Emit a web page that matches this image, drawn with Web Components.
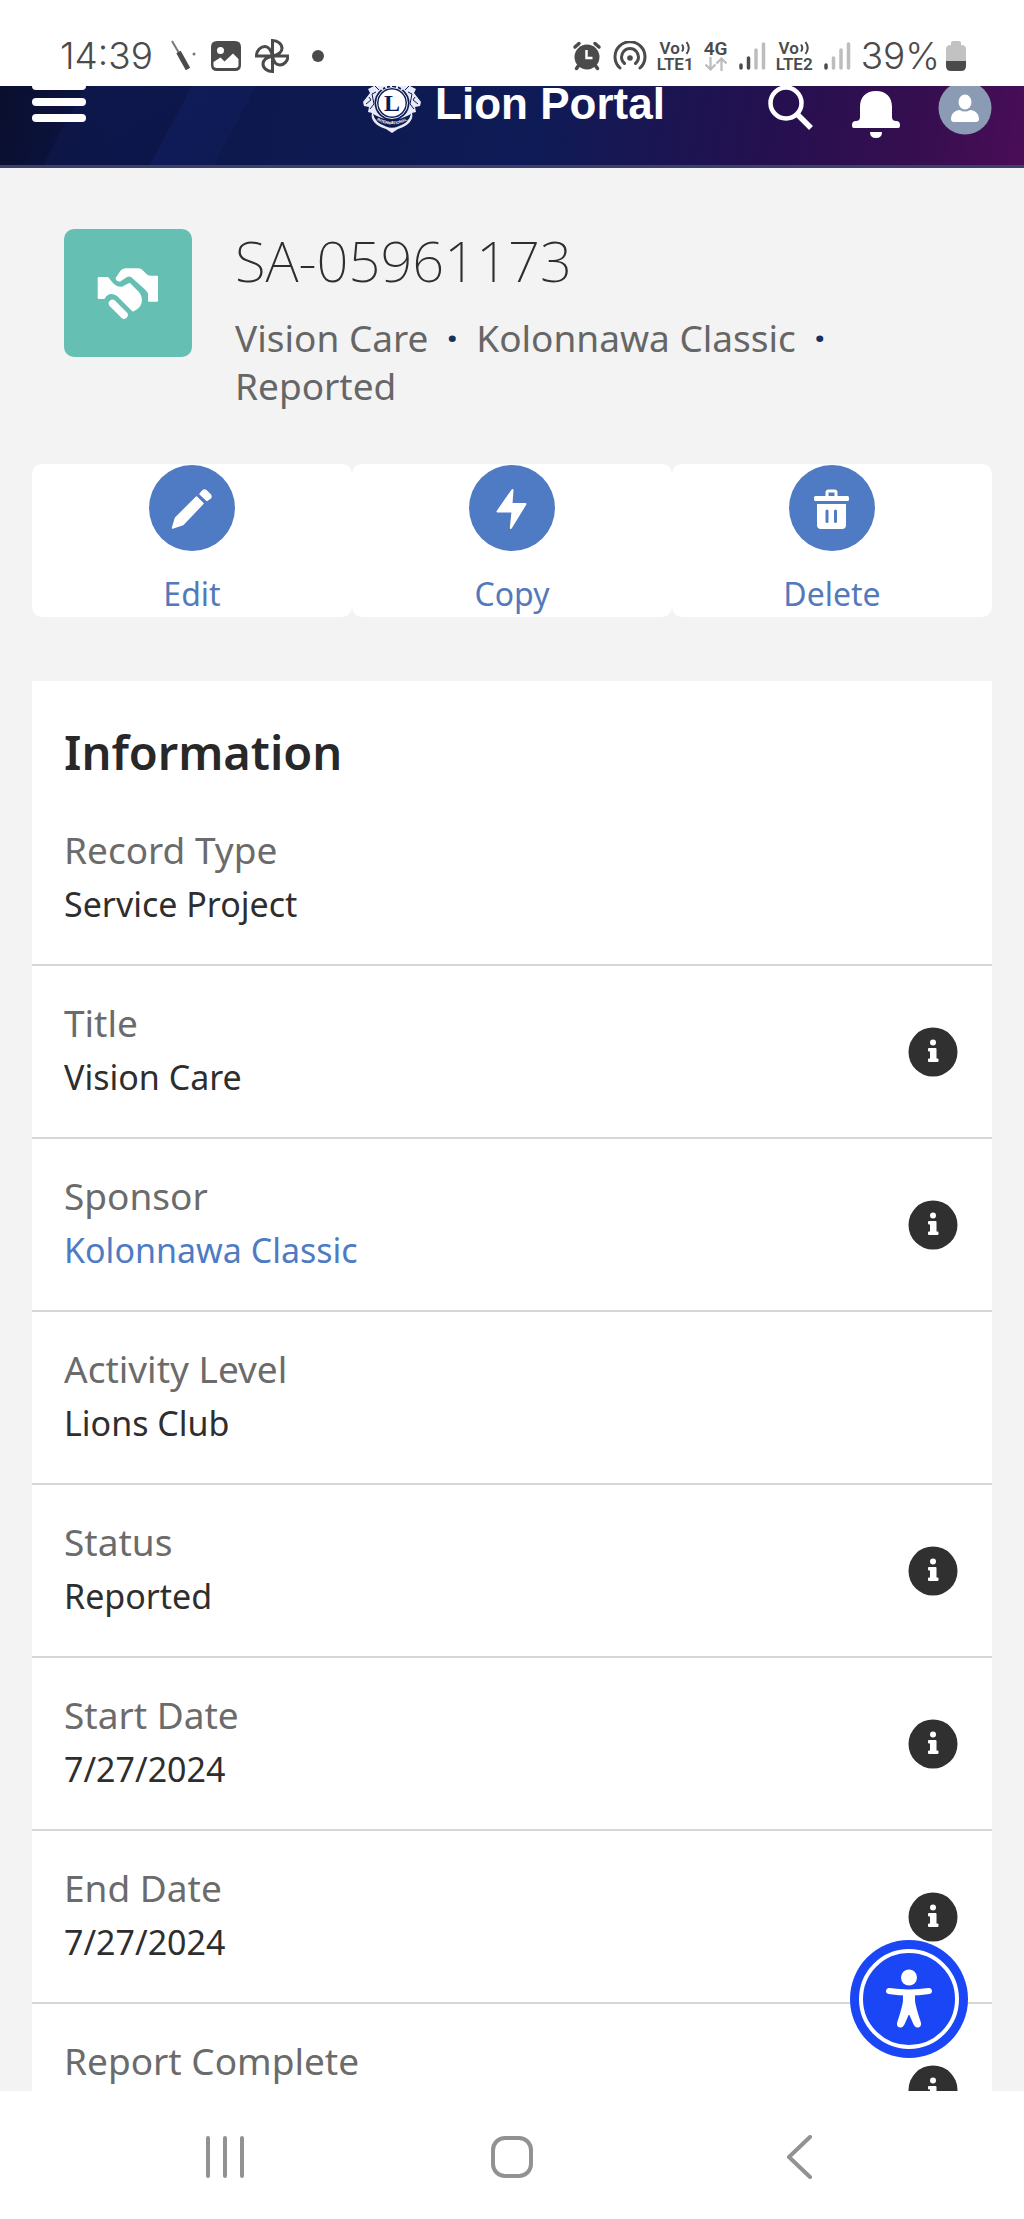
<!DOCTYPE html>
<html lang="en">
<head>
<meta charset="utf-8">
<meta name="viewport" content="width=device-width, initial-scale=1">
<title>SA-05961173 | Lion Portal</title>
<style>
  html, body { margin: 0; height: 100%; }
  body { font-family: "Noto Sans", "Open Sans", sans-serif; background: #fff; color: #2e2e2e; }
</style>
</head>
<body>
<portal-app></portal-app>

<template id="status-bar">
  <style>
    :host { display: flex; justify-content: space-between; align-items: center; box-sizing: border-box; height: 86px; padding: 26px 58px 0 60px; background: #fff; color: #4b4b4b; font-family: Inter, Roboto, sans-serif; }
    .group { display: flex; align-items: center; }
    .clock, .percent { font-size: 37px; line-height: 48px; font-weight: 300; }
    svg { display: block; flex: none; }
    .left { gap: 14px; }
    .right { gap: 10px; }
    .power { display: flex; align-items: center; gap: 6px; }
    .net { font: 600 17px/16px Roboto, sans-serif; display: flex; flex-direction: column; align-items: center; }
    .net span { display: flex; align-items: center; gap: 1px; }
    .gen { font-size: 19px; }
  </style>
  <div class="group left">
    <span class="clock">14:39</span>
    <svg width="30" height="32" viewBox="-2 0 30 32"><path d="M3 1 10 13" stroke="#777" stroke-width="2"/><path d="M9.500 12 19 29" stroke="#4b4b4b" stroke-width="5"/><circle cx="25" cy="14" r="1.500" fill="#777"/></svg>
    <svg width="30" height="30" viewBox="0 0 30 30"><path fill="#4b4b4b" fill-rule="evenodd" d="M6 0H24Q30 0 30 6V24Q30 30 24 30H6Q0 30 0 24V6Q0 0 6 0ZM9.500 6A3.500 3.500 0 1 0 9.500 13A3.500 3.500 0 1 0 9.500 6ZM2.500 21V24Q2.500 27 6 27H24Q27.500 27 27.500 24V18L22 12.500 13.500 20.500 9.500 16.500Z"/></svg>
    <svg width="34" height="34" viewBox="0 0 34 34" fill="none" stroke="#4b4b4b" stroke-width="3"><path d="M17.500 17V1.500C23 1.500 27 5 27 9.500C27 13 24 15.500 17.500 17ZM17.500 17H33C33 22 29 26 25 26C21 26 18.500 23 17.500 17ZM17.500 17V32.500C12 32.500 8 29 8 25C8 21 11 18.500 17.500 17ZM17.500 17H1.500C1.500 11 6 7.500 10 7.500C14 7.500 16 11 17.500 17Z"/></svg>
    <svg width="30" height="34" viewBox="2 0 30 34"><circle cx="17" cy="17" r="6" fill="#4b4b4b"/></svg>
  </div>
  <div class="group right">
    <svg width="32" height="30" viewBox="0 0 32 30"><g stroke="#4b4b4b" stroke-width="3.500" stroke-linecap="round"><path d="M4 6 8 2.500M28 6 24 2.500M8 24 5.500 27.500M24 24 26.500 27.500"/></g><circle cx="16" cy="16" r="12.500" fill="#4b4b4b"/><path d="M15.500 9V17H21.500" fill="none" stroke="#fff" stroke-width="2.500"/></svg>
    <svg width="34" height="30" viewBox="0 0 34 30" fill="none" stroke="#4b4b4b" stroke-width="3" stroke-linecap="round"><path d="M7 27A15 15 0 1 1 27 27M11.500 22.500A8.500 8.500 0 1 1 22.500 22.500"/><circle cx="17" cy="17" r="2.800" fill="#4b4b4b" stroke="none"/></svg>
    <div class="net"><span>Vo<svg width="10" height="14" viewBox="0 0 10 14" fill="none" stroke="#4b4b4b" stroke-width="2"><path d="M1 3.500Q3.500 7 1 10.500M5.500 1Q10 7 5.500 13"/></svg></span><span>LTE1</span></div>
    <div class="net gen"><span>4G</span><svg width="24" height="14" viewBox="0 0 24 14" fill="none" stroke="#bbb" stroke-width="2.200"><path d="M6.500 0V12M1.500 7.500 6.500 12.500 11.500 7.500M17.500 14V2M12.500 6.500 17.500 1.500 22.500 6.500"/></svg></div>
    <svg width="28" height="28" viewBox="0 0 28 28" stroke-width="3.500" stroke-linecap="round"><path d="M3 23V26M10.500 16V26" stroke="#4b4b4b"/><path d="M18 8V26M25.500 2V26" stroke="#bdbdbd"/></svg>
    <div class="net"><span>Vo<svg width="10" height="14" viewBox="0 0 10 14" fill="none" stroke="#4b4b4b" stroke-width="2"><path d="M1 3.500Q3.500 7 1 10.500M5.500 1Q10 7 5.500 13"/></svg></span><span>LTE2</span></div>
    <svg width="28" height="28" viewBox="0 0 28 28" stroke-width="3.500" stroke-linecap="round"><path d="M3 23V26" stroke="#4b4b4b"/><path d="M10.500 16V26M18 8V26M25.500 2V26" stroke="#bdbdbd"/></svg>
    <span class="power"><span class="percent">39%</span>
    <svg width="20" height="30" viewBox="0 0 20 30"><path fill="#c2c2c2" d="M5 4V2Q5 0 7 0H13Q15 0 15 2V4Q20 4 20 8V20H0V8Q0 4 5 4Z"/><path fill="#4b4b4b" d="M0 20H20V25Q20 30 15 30H5Q0 30 0 25Z"/></svg></span>
  </div>
</template>

<template id="portal-header">
  <style>
    :host { display: grid; grid-template-columns: 1fr auto 1fr; box-sizing: border-box; height: 82px; flex: none; padding: 0 32px; border-bottom: 3px solid #3b406f;
      background:
        linear-gradient(118deg, #16267300 8%, #16267333 8%, #16267300 18%, #16267355 18%, #16267333 24%, #16267300 24%),
        linear-gradient(100deg, #0a0f2e 0%, #0c1547 12%, #0d194f 28%, #0e1b56 52%, #25104f 75%, #370e50 90%, #4a0d57 100%); }
    button { border: 0; padding: 0; background: none; display: block; }
    svg { display: block; }
    .brand { display: flex; gap: 13px; padding-left: 3px; color: #fff; text-decoration: none; font: 700 44px/36px "Liberation Sans", Arial, sans-serif; }
    .tools { display: flex; justify-content: flex-end; gap: 38px; }
  </style>
  <button aria-label="Menu"><svg width="56" height="79" viewBox="0 0 56 79" fill="#fff"><rect y="-4" width="54" height="8" rx="4"/><rect y="12" width="54" height="8" rx="4"/><rect y="28" width="54" height="8" rx="4"/></svg></button>
  <a class="brand" href="#">
    <svg width="60" height="79" viewBox="0 0 60 79" aria-hidden="true">
      <path fill="#e8ebf7" d="M12 0 6 3 8 7 1 16 2 20 7 21 6 26 10 27C8 34 14 40 24 43L30 47 36 43C46 40 52 34 50 27L54 26 53 21 58 20 59 16 52 7 54 3 48 0Z"/>
      <path fill="none" stroke="#0d1a52" stroke-width="1" d="M4 18 9 14 7 11M8 23 12 18 10 8 14 6M56 18 51 14 53 11M52 23 48 18 50 8 46 6M13 0 17 4M47 0 43 4"/>
      <path fill="#0d1a52" d="M11 28Q30 39 49 28Q47 37 36 40.500Q30 43 24 40.500Q13 37 11 28Z"/>
      <circle cx="30" cy="17" r="17.500" fill="#0d1a52"/>
      <circle cx="30" cy="17" r="15.500" fill="none" stroke="#e8ebf7" stroke-width="1"/>
      <circle cx="30" cy="17" r="13.500" fill="#fff"/>
      <text x="30" y="25" text-anchor="middle" font-family="Liberation Serif, serif" font-weight="700" font-size="24" fill="#0d1a52">L</text>
      <path id="band" d="M13 33Q30 44 47 33" fill="none"/>
      <text font-family="Liberation Sans, sans-serif" font-weight="700" font-size="4" fill="#fff"><textPath href="#band" startOffset="50%" text-anchor="middle">INTERNATIONAL</textPath></text>
      <path d="M18 1 21 4M24 0V2M29 0V1M35 0V2M42 1 39 4" stroke="#e8ebf7" stroke-width="2"/>
    </svg>
    <span>Lion Portal</span>
  </a>
  <div class="tools">
    <button aria-label="Search"><svg width="46" height="79" viewBox="0 0 46 79" fill="none" stroke="#fff"><circle cx="18" cy="17" r="15.500" stroke-width="4.500"/><path d="M29 28 43 42" stroke-width="5.500"/></svg></button>
    <button aria-label="Notifications"><svg width="48" height="79" viewBox="0 0 48 79" fill="#fff"><path d="M8 21C8 11 14 5 24 5S40 11 40 21V31Q40 35 44 35Q48 35 48 39V40Q48 42 46 42H2Q0 42 0 40V39Q0 35 4 35Q8 35 8 31ZM18 46H30Q30 52 24 52T18 46Z"/></svg></button>
    <button aria-label="Profile"><svg width="54" height="79" viewBox="0 0 54 79"><circle cx="27" cy="22" r="26.500" fill="#8a9bb3"/><g fill="#fff"><ellipse cx="27" cy="16" rx="6.500" ry="7.500"/><path d="M13 33C13 27 18 24 22 24Q27 27 32 24C36 24 41 27 41 33Q41 36 38 36H16Q13 36 13 33Z"/></g></svg></button>
  </div>
</template>

<template id="record-header">
  <style>
    :host { display: flex; gap: 43px; padding: 61px 64px 0; }
    .tile { flex: none; width: 128px; height: 128px; border-radius: 10px; background: #66bfb3; }
    .tile svg { display: block; }
    h1 { margin: 0; font-size: 56px; line-height: 62px; font-weight: 250; color: #2e2e2e; }
    p { margin: 23px 0 0; font-size: 37px; line-height: 48px; font-weight: 370; color: #666; max-width: 620px; }
    i { font-style: normal; font-weight: 800; color: #16325c; margin: 0 9px; }
  </style>
  <div class="tile"><svg width="128" height="128" viewBox="0 0 128 128" fill="#fff" stroke="#fff" stroke-linejoin="round" stroke-linecap="round" stroke-width="2"><path d="M52.500 49.500 57.500 42Q59.500 40.200 62 40.200H74Q76.500 40.200 78 42L82 46Q83.500 47.700 86 47.700H93V71.700H85V64Q84 62 82 60L68 47.500Q65 45.500 62 47.500L56 51.500Q53.500 52 52.500 49.500Z"/><path d="M34.700 49H43.500L48 54.500Q53 60 59 58.500L65.500 55 74 63.500Q78 68 76.500 74Q75 79 69 81.500L54 66.500Q47 61.500 41.500 66.500L40 69H34.700Z"/><path d="M48.500 74.500 60 86" stroke-width="7.500"/></svg></div>
  <div><h1><slot name="name"></slot></h1><p><slot name="a"></slot> <i>·</i> <slot name="b"></slot> <i>·</i> <slot name="c"></slot></p></div>
</template>

<template id="record-action">
  <style>
    :host { display: block; flex: 1; background: #fff; border-radius: 10px; }
    button { display: flex; flex-direction: column; align-items: center; width: 100%; border: 0; padding: 1px 0; background: none; color: #5479bb; font: inherit; font-size: 32px; line-height: 44px; font-weight: 370; }
    .disc { display: block; width: 86px; height: 86px; border-radius: 50%; background: #4e7bc4; margin-bottom: 21px; }
  </style>
  <button><span class="disc"><slot name="icon"></slot></span><slot></slot></button>
</template>

<template id="record-field">
  <style>
    :host { display: flex; justify-content: space-between; align-items: center; padding: 30px 34px 33px 32px; border-bottom: 2px solid #d6d6d6; line-height: 54px; font-weight: 370; }
    .label { font-size: 37px; color: #6b6b6b; }
    .value { font-size: 34px; color: #2e2e2e; min-height: 54px; }
    ::slotted(a) { color: #4e7bc4; text-decoration: none; }
    button { border: 0; padding: 0; background: none; margin-top: 3px; }
    svg { display: block; }
    :host(:not([help])) button { display: none; }
  </style>
  <div><div class="label"></div><div class="value"><slot></slot></div></div>
  <button><svg width="50" height="50" viewBox="0 0 50 50"><circle cx="25" cy="25" r="24.500" fill="#303030"/><g fill="#fff"><circle cx="25" cy="15.500" r="3"/><path d="M21 21H27.500Q28.500 21 28.500 22V31.500H29.500Q30.500 31.500 30.500 32.500V34Q30.500 35 29.500 35H21Q20 35 20 34V32.500Q20 31.500 21 31.500H22V24.500H21Q20 24.500 20 23.500V22Q20 21 21 21Z"/></g></svg></button>
</template>

<template id="record-section">
  <style>
    :host { display: block; margin: 64px 32px 0; padding-top: 39px; background: #fff; }
    h2 { margin: 0 32px 9px; font-size: 47px; line-height: 64px; font-weight: 600; color: #282828; }
  </style>
  <h2></h2><slot></slot>
</template>

<template id="nav-bar">
  <style>
    :host { display: flex; flex: none; height: 128px; padding: 4px 81px 0; box-sizing: border-box; background: #fff; }
    button { flex: 1; border: 0; padding: 0; background: none; display: flex; align-items: center; justify-content: center; }
    svg { display: block; fill: none; stroke: #929292; stroke-width: 4; stroke-linecap: round; stroke-linejoin: round; }
  </style>
  <button aria-label="Recent apps"><svg width="44" height="44" viewBox="0 0 44 44"><path d="M5 3V41M22 3V41M39 3V41"/></svg></button>
  <button aria-label="Home"><svg width="44" height="44" viewBox="0 0 44 44"><rect x="3" y="3" width="38" height="38" rx="12"/></svg></button>
  <button aria-label="Back"><svg width="44" height="44" viewBox="0 0 44 44"><path d="M33 2 12 22 33 42"/></svg></button>
</template>

<template id="portal-app">
  <style>
    :host { display: flex; flex-direction: column; height: 100vh; }
    status-bar { flex: none; }
    .view { position: relative; flex: 1; min-height: 0; overflow: hidden; background: #f3f3f3; }
    .actions { display: flex; margin: 54px 32px 0; }
    .actions svg { display: block; }
    .access { position: absolute; right: 56px; bottom: 33px; border: 0; padding: 0; background: none; }
    .access svg { display: block; }
  </style>
  <status-bar></status-bar>
  <portal-header></portal-header>
  <main class="view">
    <record-header><span slot="name">SA-05961173</span><span slot="a">Vision Care</span><span slot="b">Kolonnawa Classic</span><span slot="c">Reported</span></record-header>
    <div class="actions">
      <record-action><svg slot="icon" width="86" height="86" viewBox="0 0 86 86" fill="#fff" stroke="#fff" stroke-width="1.500" stroke-linejoin="round"><path d="M47.500 32 54 38.500 34 59.500 23.500 63 26.500 53Z"/><path d="M51 29 54 25.500Q55.500 24.500 57 25.500L61.500 30Q62.500 31.500 61.500 33L58 35.500Z"/></svg>Edit</record-action>
      <record-action><svg slot="icon" width="86" height="86" viewBox="0 0 86 86" fill="#fff" stroke="#fff" stroke-width="2" stroke-linejoin="round"><path d="M43.500 25 28.500 46.500H43.500L41.800 63 56.500 39H42.500Z"/></svg>Copy</record-action>
      <record-action><svg slot="icon" width="86" height="86" viewBox="0 0 86 86" fill="#fff"><path d="M38 32V27.500Q38 26 39.500 26H45.500Q47 26 47 27.500V32" fill="none" stroke="#fff" stroke-width="3"/><rect x="25" y="31" width="35" height="5" rx="1.500"/><path fill-rule="evenodd" d="M28 39H57V60Q57 64 53 64H32Q28 64 28 60ZM38 44.500Q36.500 44.500 36.500 46V56.500Q36.500 58 38 58T39.500 56.500V46Q39.500 44.500 38 44.500ZM46.500 44.500Q45 44.500 45 46V56.500Q45 58 46.500 58T48 56.500V46Q48 44.500 46.500 44.500Z"/></svg>Delete</record-action>
    </div>
    <record-section heading="Information">
      <record-field label="Record Type">Service Project</record-field>
      <record-field label="Title" help>Vision Care</record-field>
      <record-field label="Sponsor" help><a href="#">Kolonnawa Classic</a></record-field>
      <record-field label="Activity Level">Lions Club</record-field>
      <record-field label="Status" help>Reported</record-field>
      <record-field label="Start Date" help>7/27/2024</record-field>
      <record-field label="End Date" help>7/27/2024</record-field>
      <record-field label="Report Complete" help></record-field>
    </record-section>
    <button class="access" aria-label="Accessibility menu"><svg width="118" height="118" viewBox="0 0 118 118"><circle cx="59" cy="59" r="59" fill="#1b46f5"/><circle cx="59" cy="59" r="48" fill="none" stroke="#fff" stroke-width="4"/><circle cx="59" cy="37.500" r="8" fill="#fff"/><path fill="none" stroke="#fff" stroke-width="6" stroke-linecap="round" stroke-linejoin="round" d="M39 51Q59 54 79 51"/><path fill="#fff" stroke="#fff" stroke-width="2" stroke-linejoin="round" d="M54 52H64V60Q64 65 70 83Q70.500 87 67 86.500Q65.500 86 64.500 84L59 71.500 53.500 84Q52.500 86 51 86.500Q47.500 87 48 83Q54 65 54 60Z"/></svg></button>
  </main>
  <nav-bar></nav-bar>
</template>

<script>
  class TemplateElement extends HTMLElement {
    constructor() {
      super();
      this.attachShadow({ mode: "open" }).append(document.getElementById(this.localName).content.cloneNode(true));
    }
  }
  class StatusBar extends TemplateElement {}
  class PortalHeader extends TemplateElement {}
  class RecordHeader extends TemplateElement {}
  class RecordAction extends TemplateElement {}
  class RecordField extends TemplateElement {
    connectedCallback() {
      const label = this.getAttribute("label");
      this.shadowRoot.querySelector(".label").textContent = label;
      this.shadowRoot.querySelector("button").setAttribute("aria-label", "Help: " + label);
    }
  }
  class RecordSection extends TemplateElement {
    connectedCallback() {
      this.shadowRoot.querySelector("h2").textContent = this.getAttribute("heading");
    }
  }
  class NavBar extends TemplateElement {}
  class PortalApp extends TemplateElement {}
  customElements.define("status-bar", StatusBar);
  customElements.define("portal-header", PortalHeader);
  customElements.define("record-header", RecordHeader);
  customElements.define("record-action", RecordAction);
  customElements.define("record-field", RecordField);
  customElements.define("record-section", RecordSection);
  customElements.define("nav-bar", NavBar);
  customElements.define("portal-app", PortalApp);
</script>
</body>
</html>
